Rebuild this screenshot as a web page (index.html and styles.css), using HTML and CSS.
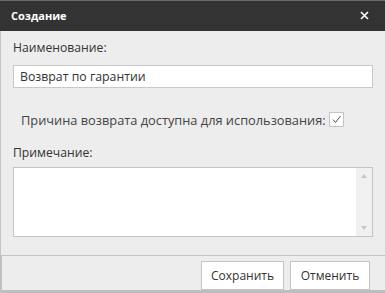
FILE: index.html
```html
<!DOCTYPE html>
<html lang="ru">
<head>
    <meta charset="UTF-8">
    <meta name="viewport" content="width=device-width, initial-scale=1.0">
    <title>Создание</title>
    <link rel="stylesheet" href="styles.css">
</head>
<body>
    <div class="dialog">
        <div class="dialog-header">
            <span class="dialog-title">Создание</span>
            <span class="dialog-close">
                <svg width="9" height="9" viewBox="0 0 9 9">
                    <path d="M1 1 L8 8 M8 1 L1 8" stroke="#fff" stroke-width="1.6" fill="none"/>
                </svg>
            </span>
        </div>

        <div class="dialog-body">
            <div class="field-label">Наименование:</div>
            <div class="text-input">Возврат по гарантии</div>

            <div class="check-row">
                <span class="check-label">Причина возврата доступна для использования:</span>
                <span class="check-box">
                    <svg width="13" height="13" viewBox="0 0 13 13">
                        <path d="M3 6.5 L5.5 9.5 L10.5 3" stroke="#555" stroke-width="1" fill="none"/>
                    </svg>
                </span>
            </div>

            <div class="field-label note-label">Примечание:</div>
            <div class="text-area">
                <div class="text-area-content"></div>
                <div class="scrollbar">
                    <span class="arrow up"></span>
                    <span class="arrow down"></span>
                </div>
            </div>
        </div>

        <div class="dialog-footer">
            <button class="dialog-button save">Сохранить</button>
            <button class="dialog-button">Отменить</button>
        </div>
    </div>
</body>
</html>
```

FILE: styles.css
```css
body {
    margin: 0;
    font-family: 'Open Sans', 'Liberation Sans', sans-serif;
    font-size: 12px;
    color: #333;
    background: #ededed;
}

.dialog {
    width: 385px;
    height: 293px;
    background: #ededed;
    display: flex;
    flex-direction: column;
    overflow: hidden;
}

.dialog-header {
    height: 30px;
    border-top: 1px solid #6a6a6a;
    background: #333;
    display: flex;
    align-items: center;
    justify-content: space-between;
    padding: 0 16px 0 11px;
}

.dialog-title {
    color: #fff;
    font-weight: 700;
    font-size: 11px;
}

.dialog-close {
    display: flex;
    width: 9px;
    height: 9px;
}

.dialog-body {
    height: 207px;
    padding: 8px 12px 13px 12px;
    border-left: 1px solid #c4c4c4;
    border-bottom: 1px solid #c4c4c4;
}

.field-label {
    line-height: 18px;
    height: 18px;
    font-size: 12.2px;
}

.text-input {
    margin-top: 8px;
    height: 21px;
    line-height: 21px;
    padding: 0 6px;
    background: #fff;
    border: 1px solid #c8c8c8;
    font-size: 12.3px;
}

.check-row {
    margin-top: 22px;
    height: 20px;
    padding-left: 8px;
    display: flex;
    align-items: center;
    gap: 3px;
    color: #444;
    font-size: 12.8px;
}

.check-box {
    width: 13px;
    height: 13px;
    border: 1px solid #c4c4c4;
    background: #fff;
    display: flex;
}

.note-label {
    margin-top: 14px;
}

.text-area {
    margin-top: 5px;
    height: 68px;
    background: #fff;
    border: 1px solid #c4c4c4;
    display: flex;
}

.text-area-content {
    flex: 1;
}

.scrollbar {
    width: 16px;
    background: #f0f0f0;
    display: flex;
    flex-direction: column;
    justify-content: space-between;
    align-items: center;
    padding: 6px 0;
}

.arrow {
    width: 0;
    height: 0;
    border-left: 3px solid transparent;
    border-right: 3px solid transparent;
}

.arrow.up {
    border-bottom: 4px solid #c6c6c6;
}

.arrow.down {
    border-top: 4px solid #c6c6c6;
}

.dialog-footer {
    flex: 1;
    border-left: 2px solid #c0c0c0;
    border-bottom: 3px solid #bdbdbd;
    display: flex;
    justify-content: flex-end;
    align-items: flex-start;
    gap: 6px;
    padding: 5px 15px 0 0;
}

.dialog-button {
    height: 29px;
    padding: 0;
    background: #fff;
    border: 1px solid #c4c4c4;
    font-family: 'Open Sans', 'Liberation Sans', sans-serif;
    font-size: 12px;
    color: #333;
    cursor: pointer;
    width: 80px;
}

.dialog-button.save {
    width: 83px;
}
```
